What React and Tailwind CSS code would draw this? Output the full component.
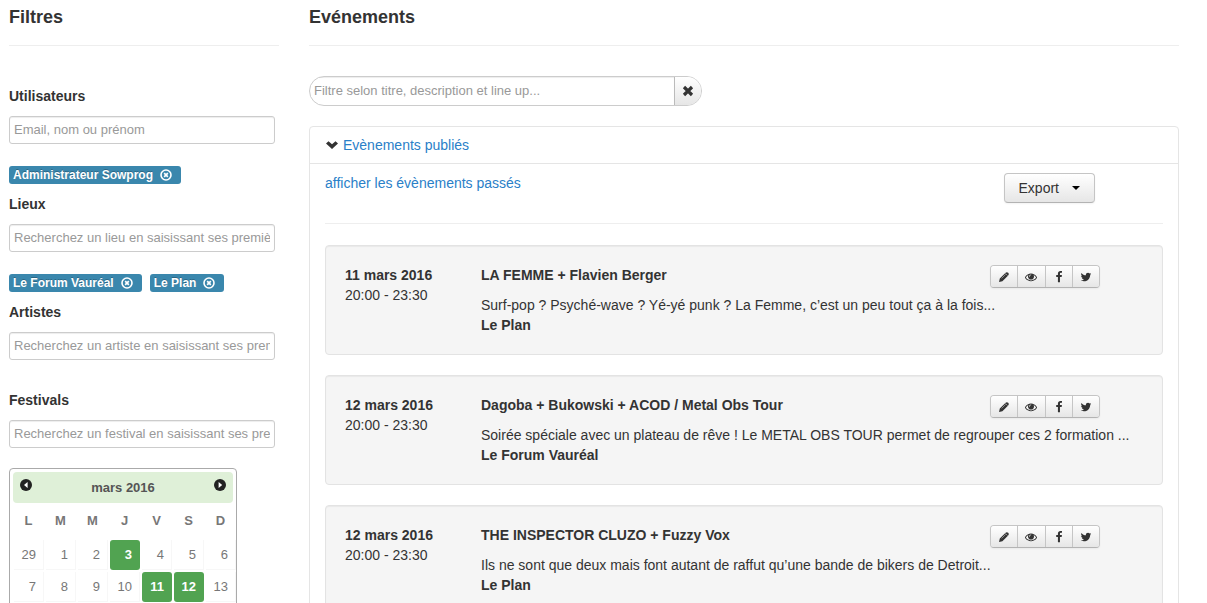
import { useState } from "react";
import clsx from "clsx";

const ICONS = {
  eye: "M1664 960q-152-236-381-353 61 104 61 225 0 185-131.5 316.5t-316.5 131.5-316.5-131.5-131.5-316.5q0-121 61-225-229 117-381 353 133 205 333.5 326.5t434.5 121.5 434.5-121.5 333.5-326.5zm-720-384q0-20-14-34t-34-14q-125 0-214.5 89.5t-89.5 214.5q0 20 14 34t34 14 34-14 14-34q0-86 61-147t147-61q20 0 34-14t14-34zm848 384q0 34-20 69-140 230-376.5 368.5t-499.5 138.5-499.5-139-376.5-368q-20-35-20-69t20-69q140-229 376.5-368t499.5-139 499.5 139 376.5 368q20 35 20 69z",
  facebook:
    "M1343 12v264h-157q-86 0-116 36t-30 108v189h293l-39 296h-254v759h-306v-759h-255v-296h255v-218q0-186 104-288.5t277-102.5q147 0 228 12z",
  twitter:
    "M1684 408q-67 98-162 167 1 14 1 42 0 130-38 259.5t-115.5 248.5-184.5 210.5-258 146-323 54.5q-271 0-496-145 35 4 78 4 225 0 401-138-105-2-188-64.5t-114-159.5q33 5 61 5 43 0 85-11-112-23-185.5-111.5t-73.5-205.5v-4q68 38 146 41-66-44-105-115t-39-154q0-88 44-163 121 149 294.5 238.5t371.5 99.5q-8-38-8-74 0-134 94.5-228.5t228.5-94.5q140 0 236 102 109-21 205-78-37 115-142 178 93-10 186-50z",
};

const Icon = ({ name }) => {
  if (name === "pencil") {
    return (
      <svg viewBox="0 0 12 12" className="size-3" aria-hidden="true">
        <path d="M1 11l.8-3.4L7.6 1.8Q8.8.6 10.2 1.8T10.2 4.4L4.4 10.2z" fill="currentColor" />
        <path d="M3.6 7.4l4-4M7.4 2.4l2.2 2.2" stroke="#c8c8c8" strokeWidth="0.6" />
      </svg>
    );
  }
  return (
    <svg viewBox="0 0 1792 1792" fill="currentColor" className="size-3" aria-hidden="true">
      <path d={ICONS[name]} />
    </svg>
  );
};

const FILTERS = [
  { id: "users", label: "Utilisateurs", placeholder: "Email, nom ou prénom", tags: ["Administrateur Sowprog"] },
  {
    id: "places",
    label: "Lieux",
    placeholder: "Recherchez un lieu en saisissant ses premières lettres",
    tags: ["Le Forum Vauréal", "Le Plan"],
  },
  { id: "artists", label: "Artistes", placeholder: "Recherchez un artiste en saisissant ses premières lettres", tags: [] },
  { id: "festivals", label: "Festivals", placeholder: "Recherchez un festival en saisissant ses premières lettres", tags: [] },
];

const WEEKDAYS = ["L", "M", "M", "J", "V", "S", "D"];
const WEEKS = [
  [29, 1, 2, 3, 4, 5, 6],
  [7, 8, 9, 10, 11, 12, 13],
];
const EVENT_DAYS = [3, 11, 12];

const EVENTS = [
  {
    date: "11 mars 2016",
    hours: "20:00 - 23:30",
    title: "LA FEMME + Flavien Berger",
    description: "Surf-pop ? Psyché-wave ? Yé-yé punk ? La Femme, c’est un peu tout ça à la fois...",
    place: "Le Plan",
  },
  {
    date: "12 mars 2016",
    hours: "20:00 - 23:30",
    title: "Dagoba + Bukowski + ACOD / Metal Obs Tour",
    description: "Soirée spéciale avec un plateau de rêve ! Le METAL OBS TOUR permet de regrouper ces 2 formation ...",
    place: "Le Forum Vauréal",
  },
  {
    date: "12 mars 2016",
    hours: "20:00 - 23:30",
    title: "THE INSPECTOR CLUZO + Fuzzy Vox",
    description: "Ils ne sont que deux mais font autant de raffut qu’une bande de bikers de Detroit...",
    place: "Le Plan",
  },
];

const ACTIONS = [
  { icon: "pencil", label: "Modifier" },
  { icon: "eye", label: "Voir" },
  { icon: "facebook", label: "Facebook" },
  { icon: "twitter", label: "Twitter" },
];

const Tag = ({ text, onRemove }) => (
  <span className="flex h-[18px] items-center rounded-[3px] bg-[#3a87ad] pl-1 pr-[9px] text-[12px] leading-[18px] font-bold text-white [text-shadow:0_-1px_0_rgba(0,0,0,0.25)]">
    {text}
    <button type="button" aria-label={`Retirer ${text}`} className="ml-[7px]" onClick={onRemove}>
      <svg viewBox="0 0 12 12" className="size-3" fill="none" stroke="currentColor" aria-hidden="true">
        <circle cx="6" cy="6" r="5" strokeWidth="1.6" />
        <path d="M4.2 4.2l3.6 3.6M7.8 4.2L4.2 7.8" strokeWidth="1.7" />
      </svg>
    </button>
  </span>
);

const Filter = ({ filter }) => {
  const [tags, setTags] = useState(filter.tags);

  return (
    <div>
      <label htmlFor={filter.id} className="block font-bold">
        {filter.label}
      </label>
      <input
        id={filter.id}
        type="text"
        placeholder={filter.placeholder}
        className="mt-2.5 block h-7 w-[266px] rounded-[3px] border border-[#cccccc] bg-white px-1 pb-0.5 text-[13px] shadow-[inset_0_1px_1px_rgba(0,0,0,0.075)] placeholder:text-[#999999]"
      />
      {tags.length > 0 ? (
        <div className="mt-[22px] mb-2.5 flex gap-2">
          {tags.map((tag) => (
            <Tag key={tag} text={tag} onRemove={() => setTags(tags.filter((t) => t !== tag))} />
          ))}
        </div>
      ) : (
        <div className={filter.id === "festivals" ? "h-5" : "h-[30px]"} />
      )}
    </div>
  );
};

const MonthArrow = ({ label, points }) => (
  <button type="button" aria-label={label} className="mb-1.5">
    <svg viewBox="0 0 12 12" className="size-3" aria-hidden="true">
      <circle cx="6" cy="6" r="6" fill="#222222" />
      <polygon points={points} fill="#ffffff" />
    </svg>
  </button>
);

const Calendar = () => (
  <div className="w-[228px] rounded-sm border border-[#aaaaaa] p-[3px] text-[13px] text-[#777777]">
    <div className="flex h-[31px] items-center justify-between rounded-sm bg-[#dff0d8] px-[7px]">
      <MonthArrow label="Mois précédent" points="7.6,3 7.6,9 4,6" />
      <span className="font-bold text-[#555555]">mars 2016</span>
      <MonthArrow label="Mois suivant" points="4.6,3 4.6,9 8.2,6" />
    </div>
    <table className="w-56 table-fixed border-collapse">
      <thead>
        <tr className="h-9">
          {WEEKDAYS.map((day, i) => (
            <th key={i} className="p-0 pr-px font-bold">
              {day}
            </th>
          ))}
        </tr>
      </thead>
      <tbody>
        {WEEKS.map((week) => (
          <tr key={week[0]}>
            {week.map((day) => {
              const active = EVENT_DAYS.includes(day);
              return (
                <td key={day} className="p-px">
                  <a
                    href="#"
                    className={clsx(
                      "block h-[30px] pr-2 text-right leading-[30px]",
                      active ? "rounded-[3px] bg-[#51a351] font-bold text-white" : "shadow-[inset_-1px_-1px_0_#f7f7f7]"
                    )}
                  >
                    {day}
                  </a>
                </td>
              );
            })}
          </tr>
        ))}
      </tbody>
    </table>
  </div>
);

const EventCard = ({ event }) => (
  <article className="mb-5 flex rounded-sm border border-[#e3e3e3] bg-[#f5f5f5] p-[19px] shadow-[inset_0_1px_1px_rgba(0,0,0,0.05)]">
    <div className="w-[136px] shrink-0">
      <p className="font-bold">{event.date}</p>
      <p>{event.hours}</p>
    </div>
    <div className="min-w-0 flex-1">
      <div className="mb-2.5 flex h-5 items-start justify-between">
        <h3 className="font-bold">{event.title}</h3>
        <div className="mr-[43px] flex h-[23px] w-[110px] shrink-0 overflow-hidden rounded-sm border border-[#c5c5c5] border-b-[#b3b3b3] shadow-[0_1px_2px_rgba(0,0,0,0.05)]">
          {ACTIONS.map(({ icon, label }) => (
            <button
              key={icon}
              type="button"
              aria-label={label}
              className="flex flex-1 items-center justify-center border-l border-[#c5c5c5] bg-linear-to-b from-white to-[#e6e6e6] first:border-l-0"
            >
              <Icon name={icon} />
            </button>
          ))}
        </div>
      </div>
      <p>{event.description}</p>
      <p className="font-bold">{event.place}</p>
    </div>
  </article>
);

const App = () => {
  const [search, setSearch] = useState("");
  const [open, setOpen] = useState(true);

  return (
    <div className="flex h-screen gap-[30px] overflow-hidden bg-white pt-[7px] pr-7 pl-[9px] font-['Liberation_Sans',Arial,sans-serif] text-[14px] leading-5 text-[#333333]">
      {/* Filters */}
      <aside className="w-[270px] shrink-0">
        <h2 className="text-[18px] leading-5 font-bold">Filtres</h2>
        <hr className="mt-[18px] mb-10 border-[#eeeeee]" />
        {FILTERS.map((filter) => (
          <Filter key={filter.id} filter={filter} />
        ))}
        <Calendar />
      </aside>

      {/* Events */}
      <main className="min-w-0 flex-1">
        <h2 className="text-[18px] leading-5 font-bold">Evénements</h2>
        <hr className="mt-[18px] mb-[30px] border-[#eeeeee]" />

        <div className="flex h-[30px] w-[393px] overflow-hidden rounded-[15px] border border-[#cccccc]">
          <input
            type="text"
            aria-label="Filtrer les évènements"
            placeholder="Filtre selon titre, description et line up..."
            value={search}
            onChange={(e) => setSearch(e.target.value)}
            className="min-w-0 flex-1 px-1 text-[13px] shadow-[inset_0_1px_1px_rgba(0,0,0,0.075)] outline-none placeholder:text-[#999999]"
          />
          <button
            type="button"
            aria-label="Effacer"
            onClick={() => setSearch("")}
            className="flex w-[27px] items-center justify-center border-l border-[#bbbbbb] bg-linear-to-b from-white to-[#e6e6e6]"
          >
            <svg viewBox="0 0 12 12" className="size-3" aria-hidden="true">
              <path d="M2 2l8 8M10 2L2 10" stroke="#333333" strokeWidth="3.2" />
            </svg>
          </button>
        </div>

        <section className="mt-5 rounded-sm border border-[#e5e5e5]">
          <div className="flex items-center border-b border-[#e5e5e5] px-4 py-2">
            <svg viewBox="0 0 12 8" className="mr-[5px] h-2 w-3" aria-hidden="true">
              <path d="M0 2.6L2.5.3 6 3.3 9.5.3 12 2.6 6 8z" fill="#333333" />
            </svg>
            <a
              href="#"
              className="text-[#2a80c8]"
              onClick={(e) => {
                e.preventDefault();
                setOpen(!open);
              }}
            >
              Evènements publiés
            </a>
          </div>
          {open && (
            <div className="px-[15px] pt-[9px]">
              <div className="flex items-start justify-between">
                <a href="#" className="text-[#2a80c8]">
                  afficher les évènements passés
                </a>
                <button
                  type="button"
                  className="mr-[68px] flex h-[30px] items-center gap-[13px] rounded-sm border border-[#c5c5c5] border-b-[#b3b3b3] bg-linear-to-b from-white to-[#e6e6e6] px-3.5 shadow-[0_1px_2px_rgba(0,0,0,0.05)]"
                >
                  Export
                  <svg viewBox="0 0 8 4" className="h-1 w-2" aria-hidden="true">
                    <path d="M0 0h8L4 4z" fill="#000000" />
                  </svg>
                </button>
              </div>
              <hr className="mt-5 mb-[21px] border-[#eeeeee]" />
              {EVENTS.map((event) => (
                <EventCard key={event.title} event={event} />
              ))}
            </div>
          )}
        </section>
      </main>
    </div>
  );
};

export default App;
